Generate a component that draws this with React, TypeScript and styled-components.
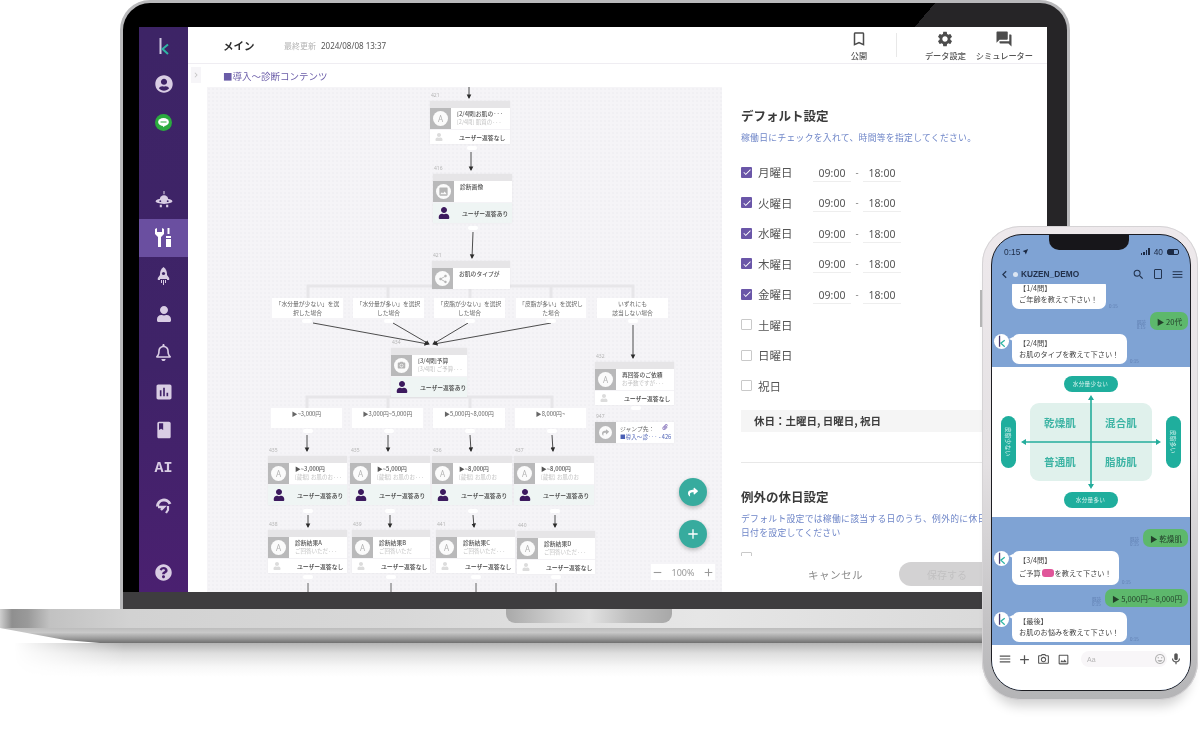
import type { ReactNode } from "react";
import styled, { createGlobalStyle } from "styled-components";
import {
  FaUserCircle,
  FaUser,
  FaRegBell,
  FaQuestionCircle,
  FaPaperclip,
  FaShare,
} from "react-icons/fa";
import {
  MdAssessment,
  MdClass,
  MdImage,
  MdShare,
  MdCameraAlt,
  MdSettings,
  MdForum,
  MdBookmarkBorder,
  MdChevronRight,
  MdChevronLeft,
  MdAdd,
  MdRemove,
  MdCheck,
  MdSearch,
  MdMenu,
  MdOutlineImage,
  MdOutlineCameraAlt,
  MdOutlineMic,
  MdOutlineEmojiEmotions,
  MdNearMe,
} from "react-icons/md";

const SANS = `"Noto Sans CJK JP", "Noto Sans", sans-serif`;
const ORIGIN_X = 207;
const ORIGIN_Y = 87;

const GlobalStyle = createGlobalStyle`
  html, body {
    margin: 0;
    background: #fff;
    font-family: ${SANS};
  }
  * { box-sizing: border-box; }
`;

const Stage = styled.div`
  position: relative;
  width: 1200px;
  height: 738px;
  overflow: hidden;
  background: #fff;
  filter: blur(0.4px);
`;

/* ---------- laptop ---------- */

const Lid = styled.div`
  position: relative;
  width: 950px;
  height: 609px;
  margin-left: 120px;
  border: solid #b9b9bb;
  border-width: 3px 3px 0;
  border-radius: 30px 30px 0 0;
  background: linear-gradient(130deg, #000 622px, #262527 622px);
  padding: 24px 20px 0 16px;
  display: flex;
  flex-direction: column;
`;

const Chin = styled.div`
  height: 17px;
  margin: 0 -20px 0 -16px;
  background: #3e3d3f;
`;

const Screen = styled.div`
  height: 565px;
  display: flex;
  background: #fff;
  overflow: hidden;
`;

const Sidebar = styled.nav`
  width: 49px;
  flex: none;
  background: linear-gradient(180deg, #3d2466 0%, #3f2368 60%, #4a2070 100%);
  display: flex;
  flex-direction: column;
  align-items: center;
  color: #d9cde4;
  padding-top: 9px;
`;

const Logo = styled.span`
  height: 20px;
`;

const LogoK = styled.span<{ $size: number }>`
  display: inline-flex;
  width: ${(p) => p.$size}px;
  height: ${(p) => p.$size}px;
`;

const NavItem = styled.div<{ $active?: boolean; $h?: number; $mt?: number }>`
  width: 49px;
  height: ${(p) => p.$h ?? 38}px;
  margin-top: ${(p) => p.$mt ?? 0}px;
  display: flex;
  align-items: center;
  justify-content: center;
  background: ${(p) => (p.$active ? "#6a4fa0" : "transparent")};
  color: ${(p) => (p.$active ? "#fff" : "#d9cde4")};
`;

const AiMark = styled.span`
  font: 700 15px/1 "Liberation Mono", monospace;
  letter-spacing: 0;
`;

const Main = styled.div`
  flex: 1;
  min-width: 0;
  display: flex;
  flex-direction: column;
`;

const TopBar = styled.header`
  height: 37px;
  flex: none;
  display: flex;
  align-items: center;
  padding: 0 14px 0 35px;
  border-bottom: 1px solid #efedf2;
`;

const PageTitle = styled.h1`
  margin: 0;
  font-size: 10.5px;
  font-weight: 700;
  color: #2d2d2d;
  width: 61px;
`;

const UpdatedLabel = styled.span`
  font-size: 8px;
  color: #b4b4b4;
  width: 37px;
`;

const UpdatedDate = styled.span`
  font: 400 8px "Noto Sans", sans-serif;
  color: #555;
`;

const TopActions = styled.div`
  margin-left: auto;
  display: flex;
  align-items: center;
  height: 100%;
`;

const TopAction = styled.div<{ $ml?: number }>`
  display: flex;
  flex-direction: column;
  align-items: center;
  gap: 2px;
  color: #4c4c4c;
  margin-left: ${(p) => p.$ml ?? 0}px;
`;

const TopActionLabel = styled.span`
  font-size: 8.2px;
  line-height: 10px;
  font-weight: 500;
  color: #555;
  white-space: nowrap;
`;

const TopDivider = styled.div`
  width: 1px;
  height: 24px;
  background: #e8e8e8;
  margin: 0 28px;
`;

const SubBar = styled.div`
  height: 23px;
  flex: none;
  display: flex;
  align-items: center;
  padding-left: 35px;
  position: relative;
  color: #6a5ca8;
  font-size: 9.5px;
`;

const Collapse = styled.span`
  position: absolute;
  left: 3px;
  top: 3px;
  width: 10px;
  height: 16px;
  display: flex;
  align-items: center;
  justify-content: center;
  background: #f6f5f8;
  color: #c4c4c4;
`;

const Workspace = styled.div`
  flex: 1;
  min-height: 0;
  display: flex;
`;

const Strip = styled.div`
  width: 19px;
  flex: none;
  background: #fff;
`;

const Canvas = styled.div`
  position: relative;
  width: 515px;
  flex: none;
  background-color: #f5f4f7;
  background-image: radial-gradient(#f1f0f4 0.7px, transparent 0.8px);
  background-size: 4px 4px;
  overflow: hidden;
`;

const EdgeLayer = styled.svg`
  position: absolute;
  inset: 0;
  width: 515px;
  height: 505px;
`;

const NodeBox = styled.div<{ $x: number; $y: number; $w: number }>`
  position: absolute;
  left: ${(p) => p.$x - ORIGIN_X}px;
  top: ${(p) => p.$y - ORIGIN_Y}px;
  width: ${(p) => p.$w}px;
  display: flex;
  flex-direction: column;
  background: #fff;
  box-shadow: 0 0 2px rgba(0, 0, 0, 0.06);
`;

const NodeId = styled.span`
  position: absolute;
  left: 1px;
  top: -9px;
  font: 400 5px "Noto Sans", sans-serif;
  color: #b5b5b5;
`;

const NodeHead = styled.div`
  height: 7px;
  background: #e6e5e7;
`;

const NodeBody = styled.div`
  height: 21px;
  display: flex;
`;

const IconBox = styled.div<{ $size?: number }>`
  width: ${(p) => p.$size ?? 21}px;
  height: ${(p) => p.$size ?? 21}px;
  flex: none;
  background: #b9b9ba;
  display: flex;
  align-items: center;
  justify-content: center;
`;

const IconDisc = styled.div<{ $size?: number }>`
  width: ${(p) => p.$size ?? 15}px;
  height: ${(p) => p.$size ?? 15}px;
  border-radius: 50%;
  background: #fbfbfb;
  color: #b5b5b5;
  display: flex;
  align-items: center;
  justify-content: center;
  font: 400 8px/1 "Noto Sans", sans-serif;
`;

const NodeText = styled.div`
  min-width: 0;
  flex: 1;
  padding: 2px 0 0 6px;
  overflow: hidden;
  white-space: nowrap;
`;

const NodeTitle = styled.div`
  font-size: 5.8px;
  line-height: 8px;
  font-weight: 500;
  color: #555;
`;

const NodeSub = styled.div`
  font-size: 5.5px;
  line-height: 9px;
  color: #c2c2c2;
`;

const NodeFoot = styled.div<{ $reply: boolean }>`
  height: ${(p) => (p.$reply ? 21 : 15)}px;
  display: flex;
  align-items: center;
  padding-left: 5px;
  background: ${(p) => (p.$reply ? "#eff5f4" : "#fff")};
  color: ${(p) => (p.$reply ? "#3c1a5e" : "#dcdcdc")};
  border-top: 1px solid #f4f3f6;
`;

const FootText = styled.span<{ $reply: boolean }>`
  font-size: 5.8px;
  font-weight: 500;
  color: #3d3d3d;
  margin-left: ${(p) => (p.$reply ? 12 : 16)}px;
  white-space: nowrap;
`;

const JumpText = styled.div`
  padding: 2px 0 0 4px;
  white-space: nowrap;
  flex: 1;
  position: relative;
`;

const JumpTitle = styled.div`
  font-size: 5.8px;
  line-height: 9px;
  color: #666;
`;

const JumpLink = styled.div`
  font-size: 5.6px;
  line-height: 9px;
  color: #4a5fb5;
`;

const JumpClip = styled.span`
  position: absolute;
  right: 6px;
  top: 2px;
  color: #8e7cc0;
  display: flex;
`;

const BranchBox = styled.div<{ $x: number; $y: number; $w: number; $h: number; $top?: boolean }>`
  position: absolute;
  left: ${(p) => p.$x - ORIGIN_X}px;
  top: ${(p) => p.$y - ORIGIN_Y}px;
  width: ${(p) => p.$w}px;
  height: ${(p) => p.$h}px;
  background: #fff;
  font-size: 5.8px;
  line-height: 9px;
  color: #666;
  display: flex;
  align-items: ${(p) => (p.$top ? "flex-start" : "center")};
  justify-content: center;
  text-align: center;
  padding-top: ${(p) => (p.$top ? "1px" : "0")};
  white-space: pre;
`;

const FloatControls = styled.div`
  position: absolute;
  right: 7px;
  bottom: 12px;
  display: flex;
  flex-direction: column;
  align-items: flex-end;
`;

const Fab = styled.div<{ $mb: number }>`
  width: 28px;
  height: 28px;
  margin: 0 8px ${(p) => p.$mb}px 0;
  border-radius: 50%;
  background: #37ab9e;
  color: #fff;
  display: flex;
  align-items: center;
  justify-content: center;
  box-shadow: 0 2px 4px rgba(0, 0, 0, 0.25);
`;

const ZoomBar = styled.div`
  width: 64px;
  height: 16px;
  background: #fff;
  display: flex;
  align-items: center;
  justify-content: space-between;
  color: #999;
  font: 400 9px "Noto Sans", sans-serif;
`;

/* ---------- settings panel ---------- */

const Panel = styled.aside`
  position: relative;
  flex: 1;
  min-width: 0;
  margin-left: 1px;
  padding: 20px 60px 0 18px;
  background: #fff;
  overflow: hidden;
  white-space: nowrap;
`;

const PanelTitle = styled.h2`
  margin: 0;
  font-size: 12.5px;
  line-height: 18px;
  font-weight: 700;
  color: #3b3b3b;
`;

const PanelNote = styled.p<{ $mb?: number }>`
  margin: 6px 0 ${(p) => p.$mb ?? 0}px;
  font-size: 8.8px;
  line-height: 14px;
  color: #6f86c8;
  letter-spacing: 0.3px;
`;

const DayRow = styled.div`
  height: 30.5px;
  display: flex;
  align-items: center;
`;

const Check = styled.span<{ $on: boolean }>`
  width: 11px;
  height: 11px;
  flex: none;
  border-radius: 1px;
  background: ${(p) => (p.$on ? "#6a56a8" : "#fff")};
  border: ${(p) => (p.$on ? "none" : "1px solid #c9c9c9")};
  color: #fff;
  display: flex;
  align-items: center;
  justify-content: center;
`;

const DayName = styled.span`
  width: 55px;
  margin-left: 6px;
  font-size: 11.5px;
  color: #555;
`;

const TimeField = styled.span`
  width: 38px;
  text-align: center;
  font: 400 10.5px "Noto Sans", sans-serif;
  color: #555;
  border-bottom: 1px solid #eeeeee;
  line-height: 16px;
  position: relative;
  top: 1px;
`;

const TimeDash = styled.span`
  width: 12px;
  text-align: center;
  font-size: 9px;
  color: #666;
`;

const HolidayBar = styled.div`
  margin-top: 9px;
  width: 244px;
  height: 22px;
  padding-left: 13px;
  background: #f5f5f5;
  display: flex;
  align-items: center;
  font-size: 10.5px;
  font-weight: 700;
  color: #3d3d3d;
`;

const PanelRule = styled.hr`
  margin: 30px 0 25px;
  width: 244px;
  border: 0;
  border-top: 1px solid #e8e8e8;
`;

const EmptyCheck = styled.span`
  display: block;
  width: 11px;
  height: 11px;
  margin-top: 12px;
  border: 1px solid #c9c9c9;
  border-radius: 1px;
`;

const PanelFooter = styled.div`
  position: absolute;
  left: 0;
  right: 0;
  bottom: 0;
  height: 36px;
  background: #fff;
  display: flex;
  align-items: center;
  padding-left: 85px;
  gap: 36px;
`;

const CancelText = styled.span`
  font-size: 10.6px;
  color: #8a8a8a;
  letter-spacing: 0.4px;
`;

const SaveButton = styled.span`
  width: 100px;
  height: 24px;
  border-radius: 12px;
  background: #d3d2d3;
  color: #c2c1c2;
  font-size: 10px;
  display: flex;
  align-items: center;
  padding-left: 28px;
`;

/* ---------- laptop base ---------- */

const Base = styled.div`
  width: 1190px;
  height: 34px;
  display: flex;
  flex-direction: column;
  clip-path: polygon(0 0, 100% 0, 100% 100%, 100px 100%, 65px 31px, 0 19px);
`;

const BaseTop = styled.div`
  height: 19px;
  flex: none;
  background: linear-gradient(90deg, #cfcfcf 0, #8f8f8f 12px, #9a9a9a 28px, #c2c2c2 50px, #d2d2d2 130px, #d8d8d8 400px, #e6e6e6 700px, #d9d9d9 1000px);
  padding-left: 506px;
`;

const Notch = styled.div`
  width: 166px;
  height: 14px;
  border-radius: 0 0 9px 9px;
  background: linear-gradient(90deg, #a9a9a9, #cfcfcf 30%, #e2e2e2 50%, #bdbdbd 75%, #a8a8a8);
`;

const BaseBottom = styled.div`
  flex: 1;
  background: linear-gradient(180deg, #bdbdbd 0, #c8c8c8 30%, #999 70%, #6f6f6f 100%);
`;

const Reflection = styled.div`
  width: 1000px;
  height: 34px;
  margin-left: 14px;
  background: linear-gradient(180deg, #b3b3b3 0, #dedede 30%, #f7f7f7 70%, #fff 100%);
  -webkit-mask-image: linear-gradient(90deg, transparent 0, #000 110px);
  mask-image: linear-gradient(90deg, transparent 0, #000 110px);
`;

/* ---------- phone ---------- */

const Phone = styled.div`
  position: absolute;
  left: 982px;
  top: 226px;
  width: 216px;
  height: 474px;
  border-radius: 38px;
  padding: 8px 7px 9px 9px;
  background: linear-gradient(180deg, #eee9ec 0, #e4e1e3 50%, #b4b4b6 100%);
  box-shadow: inset 0 0 0 1px #d5d3d5, 0 14px 12px -8px rgba(0, 0, 0, 0.18);
`;

const PhoneButton = styled.span`
  position: absolute;
  left: -2px;
  top: 64px;
  width: 2px;
  height: 37px;
  background: #b5b5b5;
`;

const PhoneScreen = styled.div`
  position: relative;
  height: 100%;
  border-radius: 31px;
  border: 1.5px solid #1d1d22;
  background: #7fa3d4;
  overflow: hidden;
  display: flex;
  flex-direction: column;
`;

const PhoneNotch = styled.div`
  position: absolute;
  left: 57px;
  top: 0;
  width: 80px;
  height: 15px;
  background: #17161a;
  border-radius: 0 0 10px 10px;
`;

const StatusBar = styled.div`
  height: 29px;
  flex: none;
  display: flex;
  align-items: center;
  justify-content: space-between;
  padding: 4px 11px 0 12px;
  color: #1c2a44;
  font: 500 8.4px "Liberation Sans", sans-serif;
`;

const StatusGroup = styled.span`
  display: flex;
  align-items: center;
  gap: 2px;
`;

const SignalBar = styled.span<{ $h: number }>`
  width: 1.5px;
  height: ${(p) => p.$h}px;
  background: #1c2a44;
`;

const Signal = styled.span`
  display: flex;
  align-items: flex-end;
  gap: 1px;
  margin-right: 2px;
`;

const Battery = styled.span`
  width: 12px;
  height: 6px;
  border: 0.8px solid #1c2a44;
  border-radius: 2px;
  background: linear-gradient(90deg, #1c2a44 60%, transparent 60%);
  margin-left: 2px;
`;

const ChatHeader = styled.div`
  height: 20px;
  flex: none;
  display: flex;
  align-items: center;
  padding: 0 6px 0 5px;
  color: #23344f;
`;

const ChatTitle = styled.span`
  margin-left: 1px;
  font: 700 8.3px "Liberation Sans", sans-serif;
  color: #22304a;
  display: flex;
  align-items: center;
  gap: 3px;
`;

const TitleDot = styled.span`
  width: 5px;
  height: 5px;
  border-radius: 50%;
  background: #dbe5f2;
`;

const HeaderIcons = styled.span`
  margin-left: auto;
  display: flex;
  align-items: center;
  gap: 8px;
`;

const MemoIcon = styled.span`
  width: 8px;
  height: 10px;
  border: 1px solid #23344f;
  border-radius: 1px;
  margin: 0 1px;
`;

const ChatArea = styled.div<{ $h: number; $pt?: number }>`
  height: ${(p) => p.$h}px;
  flex: none;
  overflow: hidden;
  padding-top: ${(p) => p.$pt ?? 0}px;
  display: flex;
  flex-direction: column;
`;

const Incoming = styled.div<{ $mt: number }>`
  display: flex;
  align-items: flex-start;
  margin: ${(p) => p.$mt}px 0 0 2px;
`;

const Avatar = styled.span<{ $hidden?: boolean }>`
  width: 15px;
  height: 15px;
  flex: none;
  border-radius: 50%;
  background: ${(p) => (p.$hidden ? "transparent" : "#fff")};
  display: flex;
  align-items: center;
  justify-content: center;
`;

const Bubble = styled.div<{ $w: number; $tall?: boolean; $tail?: boolean }>`
  position: relative;
  margin-left: 3px;
  width: ${(p) => p.$w}px;
  padding: ${(p) => (p.$tall ? "3px 0 5px 7px" : "4px 0 4px 7px")};
  background: #fff;
  border-radius: 7px;
  font-size: 7.2px;
  line-height: ${(p) => (p.$tall ? 13 : 11)}px;
  color: #444;
  white-space: nowrap;
  &::before {
    content: "";
    display: ${(p) => (p.$tail ? "block" : "none")};
    position: absolute;
    left: -3px;
    top: 3px;
    border: solid transparent;
    border-width: 2px 4px 2px 0;
    border-right-color: #fff;
  }
`;

const Stamp = styled.span`
  align-self: flex-end;
  margin-left: 3px;
  font-size: 4.5px;
  line-height: 5px;
  color: #5f7eb0;
  white-space: pre;
`;

const Redacted = styled.span`
  display: inline-block;
  width: 12px;
  height: 8px;
  margin: 0 1px;
  vertical-align: -1px;
  border-radius: 3px;
  background: #e0569a;
`;

const Outgoing = styled.div<{ $mt: number }>`
  display: flex;
  justify-content: flex-end;
  align-items: flex-end;
  gap: 4px;
  margin: ${(p) => p.$mt}px 2px 0 0;
`;

const GreenBubble = styled.div`
  height: 18px;
  padding: 0 6px 0 7px;
  border-radius: 7px;
  background: #5db86c;
  color: #23402a;
  font-size: 7.6px;
  display: flex;
  align-items: center;
  white-space: nowrap;
`;

const RichMenu = styled.section`
  height: 150px;
  flex: none;
  background: #fff;
  display: grid;
  grid-template-columns: 15px 122px 15px;
  grid-template-rows: 16px 78px 16px;
  column-gap: 14px;
  row-gap: 11px;
  justify-content: center;
  align-content: center;
  justify-items: center;
  align-items: center;
  margin-left: -1px;
`;

const Pill = styled.span<{ $col: number; $row: number; $vertical?: boolean }>`
  grid-column: ${(p) => p.$col};
  grid-row: ${(p) => p.$row};
  width: ${(p) => (p.$vertical ? "15px" : "54px")};
  height: ${(p) => (p.$vertical ? "52px" : "16px")};
  border-radius: 8px;
  background: #1fae9d;
  color: #d7f2ee;
  font-size: 5.6px;
  display: flex;
  align-items: center;
  justify-content: center;
  white-space: nowrap;
  writing-mode: ${(p) => (p.$vertical ? "vertical-rl" : "horizontal-tb")};
  text-orientation: sideways;
  letter-spacing: 0.3px;
`;

const Matrix = styled.div`
  position: relative;
  grid-column: 2;
  grid-row: 2;
  width: 122px;
  height: 78px;
  background: #e0f1ec;
  border-radius: 9px;
  display: grid;
  grid-template: 1fr 1fr / 1fr 1fr;
`;

const MatrixCell = styled.span`
  display: flex;
  align-items: center;
  justify-content: center;
  font-size: 10.5px;
  font-weight: 700;
  color: #3db4a4;
  letter-spacing: 0.2px;
`;

const MatrixAxes = styled.svg`
  position: absolute;
  left: -9px;
  top: -8px;
  width: 140px;
  height: 94px;
`;

const InputBar = styled.div`
  flex: 1;
  background: #fff;
  display: flex;
  align-items: flex-start;
  padding: 6px 4px 0 3px;
  color: #555;
`;

const InputIcon = styled.span`
  width: 19.5px;
  height: 16px;
  display: flex;
  align-items: center;
  justify-content: center;
`;

const InputField = styled.div`
  margin: 0 0 0 8px;
  flex: 1;
  height: 16px;
  border-radius: 8px;
  background: #f8f6f8;
  display: flex;
  align-items: center;
  justify-content: space-between;
  padding: 0 1px 0 6px;
  color: #b5b5b5;
  font: 400 7px "Liberation Sans", sans-serif;
`;

/* ---------- data ---------- */

type IconKind = "a" | "image" | "share" | "camera";

type DiagramNode = {
  id: string;
  x: number;
  y: number;
  w: number;
  title: string;
  sub?: string;
  icon: IconKind;
  reply?: boolean;
  noFoot?: boolean;
};

const nodes: DiagramNode[] = [
  { id: "421", x: 430, y: 101, w: 80, title: "[2/4問]お肌の···", sub: "[2/4問] 肌質の···", icon: "a" },
  { id: "416", x: 433, y: 174, w: 79, title: "診断画像", icon: "image", reply: true },
  { id: "421", x: 432, y: 261, w: 78, title: "お肌のタイプが", icon: "share", noFoot: true },
  { id: "434", x: 391, y: 348, w: 76, title: "[3/4問]予算", sub: "[3/4問] ご予算···", icon: "camera", reply: true },
  { id: "432", x: 595, y: 362, w: 79, title: "再回答のご依頼", sub: "お手数ですが···", icon: "a" },
  { id: "435", x: 268, y: 456, w: 79, title: "▶~3,000円", sub: "[蔵据] お肌のお···", icon: "a", reply: true },
  { id: "435", x: 350, y: 456, w: 80, title: "▶~5,000円", sub: "[蔵据] お肌のお···", icon: "a", reply: true },
  { id: "436", x: 432, y: 456, w: 80, title: "▶~8,000円", sub: "[蔵据] お肌のお", icon: "a", reply: true },
  { id: "437", x: 514, y: 456, w: 80, title: "▶~8,000円", sub: "[蔵据] お肌のお", icon: "a", reply: true },
  { id: "438", x: 268, y: 530, w: 79, title: "診断結果A", sub: "ご回答いただ···", icon: "a" },
  { id: "439", x: 352, y: 530, w: 78, title: "診断結果B", sub: "ご回答いただ", icon: "a" },
  { id: "441", x: 436, y: 530, w: 79, title: "診断結果C", sub: "ご回答いただ···", icon: "a" },
  { id: "440", x: 517, y: 531, w: 78, title: "診断結果D", sub: "ご回答いただ···", icon: "a" },
];

const branches = [
  { x: 272, y: 298, w: 71, h: 20, text: "「水分量が少ない」を選\n択した場合" },
  { x: 353, y: 298, w: 71, h: 20, text: "「水分量が多い」を選択\nした場合" },
  { x: 434, y: 298, w: 71, h: 20, text: "「皮脂が少ない」を選択\nした場合" },
  { x: 516, y: 298, w: 70, h: 20, text: "「皮脂が多い」を選択し\nた場合" },
  { x: 597, y: 298, w: 71, h: 20, text: "いずれにも\n該当しない場合" },
  { x: 271, y: 408, w: 71, h: 20, text: "▶~3,000円", top: true },
  { x: 352, y: 408, w: 71, h: 20, text: "▶3,000円~5,000円", top: true },
  { x: 433, y: 408, w: 72, h: 20, text: "▶5,000円~8,000円", top: true },
  { x: 515, y: 408, w: 71, h: 20, text: "▶8,000円~", top: true },
];

const arrows: [number, number, number, number][] = [
  [469, 87, 469, 98],
  [471, 152, 471, 170],
  [473, 232, 472, 258],
  [313, 323, 428, 344],
  [393, 323, 429, 344],
  [468, 323, 433, 344],
  [551, 323, 434, 344],
  [633, 325, 633, 358],
  [307, 435, 307, 451],
  [388, 435, 388, 451],
  [470, 435, 471, 451],
  [552, 435, 553, 451],
  [308, 515, 308, 527],
  [390, 515, 390, 527],
  [473, 515, 474, 527],
  [555, 515, 555, 527],
];

const stubs = [
  [308, 583],
  [391, 583],
  [476, 583],
  [556, 583],
];

const connectors = [
  "M308 298V286H633V298M388 286V298M470 286V298M551 286V298",
  "M307 408V397H552V408M388 397V408M470 397V408",
];

const dots = [
  [472, 148], [473, 228], [307, 321], [389, 321], [470, 321], [551, 321], [633, 321],
  [308, 431], [389, 431], [470, 431], [552, 431], [308, 511], [390, 511], [473, 511],
  [555, 511], [308, 577], [391, 577], [476, 577], [556, 577], [636, 408],
];

const days = [
  { name: "月曜日", on: true },
  { name: "火曜日", on: true },
  { name: "水曜日", on: true },
  { name: "木曜日", on: true },
  { name: "金曜日", on: true },
  { name: "土曜日", on: false },
  { name: "日曜日", on: false },
  { name: "祝日", on: false },
];

/* ---------- small drawings ---------- */

function KMark({ size }: { size: number }) {
  return (
    <LogoK $size={size}>
      <svg viewBox="0 0 16 20" width={size} height={size}>
        <path d="M4.500 2v16" stroke="#cfc6e0" strokeWidth="2" fill="none" />
        <path d="M12 8.500 6.500 13l5.500 5" stroke="#2fb5a4" strokeWidth="2" fill="none" />
      </svg>
    </LogoK>
  );
}

function PhoneK() {
  return (
    <LogoK $size={13}>
      <svg viewBox="0 0 16 20" width={13} height={13}>
        <path d="M5 1v17" stroke="#4b3a70" strokeWidth="2" fill="none" />
        <path d="M13 8 7 12.500l6 5.500" stroke="#2fb5a4" strokeWidth="2" fill="none" />
      </svg>
    </LogoK>
  );
}

function LineIcon() {
  return (
    <svg width="17" height="17" viewBox="0 0 17 17">
      <circle cx="8.500" cy="8.500" r="8.500" fill="#2bab3f" />
      <ellipse cx="8.500" cy="8" rx="5.400" ry="4" fill="#fff" />
      <path d="M7.500 11.500l1.200 1.800 1.300-1.800z" fill="#fff" />
      <path d="M5.500 8h6" stroke="#2bab3f" strokeWidth="1" />
    </svg>
  );
}

function RobotIcon() {
  return (
    <svg width="18" height="18" viewBox="0 0 17 17" fill="#d9cde4">
      <path d="M8 0h1v3H8z" />
      <path d="M4.500 8a4 4 0 0 1 8 0z" />
      <ellipse cx="8.500" cy="9.600" rx="8" ry="2.600" />
      <circle cx="5" cy="9.600" r=".9" fill="#3d2466" />
      <circle cx="12" cy="9.600" r=".9" fill="#3d2466" />
      <path d="M4.500 13h2v2.400h-2zM10.500 13h2v2.400h-2z" />
    </svg>
  );
}

function ToolsIcon() {
  return (
    <svg width="18" height="20" viewBox="0 0 18 20" fill="#fff">
      <path d="M0 1v5l3 3v10h3V9l3-3V1L7 0v4H2V0z" />
      <path d="M12.500 0h2v6h-2z" />
      <path d="M11 8h5v2h-5z" />
      <path d="M11 11h5v8h-5z" />
    </svg>
  );
}

function RocketIcon() {
  return (
    <svg width="13" height="18" viewBox="0 0 13 18" fill="#d9cde4">
      <path d="M6.500 0C9 2 10 4.500 10 7v5H3V7c0-2.500 1-5 3.500-7z" />
      <circle cx="6.500" cy="6.500" r="1.600" fill="#3d2466" />
      <path d="M3 8 .8 11v2H3zM10 8l2.200 3v2H10zM6 13h1v5H6zM4 13h1v3H4zM8 13h1v3H8z" />
    </svg>
  );
}

function HeadsetIcon() {
  return (
    <svg width="18" height="18" viewBox="0 0 18 18" fill="none" stroke="#d9cde4">
      <path d="M2.500 9.500A6.500 6.500 0 0 1 15 7" strokeWidth="3" />
      <path d="M3 10h6l-3 3" strokeWidth="2.400" />
      <path d="M13 9v4l-2 3" strokeWidth="2.200" />
    </svg>
  );
}

function NodeIcon({ kind }: { kind: IconKind }) {
  switch (kind) {
    case "image":
      return <IconDisc><MdImage size={11} /></IconDisc>;
    case "share":
      return <IconDisc><MdShare size={10} /></IconDisc>;
    case "camera":
      return <IconDisc><MdCameraAlt size={9} /></IconDisc>;
    default:
      return <IconDisc>A</IconDisc>;
  }
}

function Node({ n }: { n: DiagramNode }) {
  return (
    <NodeBox $x={n.x} $y={n.y} $w={n.w}>
      <NodeId>{n.id}</NodeId>
      <NodeHead />
      <NodeBody>
        <IconBox><NodeIcon kind={n.icon} /></IconBox>
        <NodeText>
          <NodeTitle>{n.title}</NodeTitle>
          {n.sub && <NodeSub>{n.sub}</NodeSub>}
        </NodeText>
      </NodeBody>
      {!n.noFoot && (
        <NodeFoot $reply={!!n.reply}>
          <FaUser size={n.reply ? 12 : 8} />
          <FootText $reply={!!n.reply}>
            {n.reply ? "ユーザー返答あり" : "ユーザー返答なし"}
          </FootText>
        </NodeFoot>
      )}
    </NodeBox>
  );
}

function Diagram() {
  return (
    <>
      <EdgeLayer viewBox={`${ORIGIN_X} ${ORIGIN_Y} 515 505`}>
        <defs>
          <marker id="head" markerWidth="6" markerHeight="6" refX="4" refY="3" orient="auto">
            <path d="M0 .4 5 3 0 5.600z" fill="#2c2c2c" />
          </marker>
        </defs>
        {connectors.map((d) => (
          <path key={d} d={d} fill="none" stroke="#e7e6e9" strokeWidth="3" />
        ))}
        {arrows.map(([x1, y1, x2, y2]) => (
          <line
            key={`${x1}-${y1}-${x2}`}
            x1={x1} y1={y1} x2={x2} y2={y2}
            stroke="#3a3a3a" strokeWidth="0.9" markerEnd="url(#head)"
          />
        ))}
        {stubs.map(([x, y]) => (
          <line key={x} x1={x} y1={y} x2={x} y2={592} stroke="#555" strokeWidth="0.9" />
        ))}
        {dots.map(([x, y]) => (
          <rect key={`${x}-${y}`} x={x - 5} y={y - 2} width="10" height="4" rx="2" fill="#fff" />
        ))}
      </EdgeLayer>
      {branches.map((b) => (
        <BranchBox key={b.text} $x={b.x} $y={b.y} $w={b.w} $h={b.h} $top={b.top}>
          {b.text}
        </BranchBox>
      ))}
      {nodes.map((n) => (
        <Node key={`${n.x}-${n.y}`} n={n} />
      ))}
      <NodeBox $x={595} $y={422} $w={79}>
        <NodeId>947</NodeId>
        <NodeBody>
          <IconBox>
            <IconDisc $size={13}><FaShare size={7} /></IconDisc>
          </IconBox>
          <JumpText>
            <JumpTitle>ジャンプ先：</JumpTitle>
            <JumpLink>■導入～診··· - 426</JumpLink>
            <JumpClip><FaPaperclip size={6} /></JumpClip>
          </JumpText>
        </NodeBody>
      </NodeBox>
      <FloatControls>
        <Fab $mb={14}><FaShare size={10} /></Fab>
        <Fab $mb={16}><MdAdd size={16} /></Fab>
        <ZoomBar>
          <MdRemove size={13} />
          100%
          <MdAdd size={13} />
        </ZoomBar>
      </FloatControls>
    </>
  );
}

function Settings() {
  return (
    <Panel>
      <PanelTitle>デフォルト設定</PanelTitle>
      <PanelNote $mb={11.75}>稼働日にチェックを入れて、時間等を指定してください。</PanelNote>
      {days.map((d) => (
        <DayRow key={d.name}>
          <Check $on={d.on}>{d.on && <MdCheck size={10} />}</Check>
          <DayName>{d.name}</DayName>
          {d.on && (
            <>
              <TimeField>09:00</TimeField>
              <TimeDash>-</TimeDash>
              <TimeField>18:00</TimeField>
            </>
          )}
        </DayRow>
      ))}
      <HolidayBar>休日：土曜日, 日曜日, 祝日</HolidayBar>
      <PanelRule />
      <PanelTitle>例外の休日設定</PanelTitle>
      <PanelNote>
        デフォルト設定では稼働に該当する日のうち、例外的に休日にしたい
        <br />
        日付を設定してください
      </PanelNote>
      <EmptyCheck />
      <PanelFooter>
        <CancelText>キャンセル</CancelText>
        <SaveButton>保存する</SaveButton>
      </PanelFooter>
    </Panel>
  );
}

function Chat({ mt, w, avatar = true, tall, children }: { mt: number; w: number; avatar?: boolean; tall?: boolean; children: ReactNode }) {
  return (
    <Incoming $mt={mt}>
      <Avatar $hidden={!avatar}>{avatar && <PhoneK />}</Avatar>
      <Bubble $w={w} $tall={tall} $tail={avatar}>{children}</Bubble>
      <Stamp>0:15</Stamp>
    </Incoming>
  );
}

function Reply({ mt, children }: { mt: number; children: ReactNode }) {
  return (
    <Outgoing $mt={mt}>
      <Stamp>{"既読\n0:15"}</Stamp>
      <GreenBubble>{children}</GreenBubble>
    </Outgoing>
  );
}

function PhoneMock() {
  return (
    <Phone>
      <PhoneButton />
      <PhoneScreen>
        <PhoneNotch />
        <StatusBar>
          <StatusGroup>0:15 <MdNearMe size={7} /></StatusGroup>
          <StatusGroup>
            <Signal>
              <SignalBar $h={2} /><SignalBar $h={3} /><SignalBar $h={5} /><SignalBar $h={7} />
            </Signal>
            40
            <Battery />
          </StatusGroup>
        </StatusBar>
        <ChatHeader>
          <MdChevronLeft size={15} />
          <ChatTitle><TitleDot />KUZEN_DEMO</ChatTitle>
          <HeaderIcons>
            <MdSearch size={13} />
            <MemoIcon />
            <MdMenu size={13} />
          </HeaderIcons>
        </ChatHeader>
        <ChatArea $h={83}>
          <Chat mt={-5} w={94} avatar={false}>
            　【1/4問】
            <br />
            ご年齢を教えて下さい！
          </Chat>
          <Reply mt={3}>▶ 20代</Reply>
          <Chat mt={4} w={115}>
            　【2/4問】
            <br />
            お肌のタイプを教えて下さい！
          </Chat>
        </ChatArea>
        <RichMenu>
          <Pill $col={2} $row={1}>水分量少ない</Pill>
          <Pill $col={1} $row={2} $vertical>皮脂少ない</Pill>
          <Matrix>
            <MatrixCell>乾燥肌</MatrixCell>
            <MatrixCell>混合肌</MatrixCell>
            <MatrixCell>普通肌</MatrixCell>
            <MatrixCell>脂肪肌</MatrixCell>
            <MatrixAxes viewBox="0 0 140 94">
              <path d="M70 3V91M2 47H138" stroke="#25ad9c" strokeWidth="1.6" />
              <path d="M70 0l-3 5h6zM70 94l-3-5h6zM0 47l5-3v6zM140 47l-5-3v6z" fill="#25ad9c" />
            </MatrixAxes>
          </Matrix>
          <Pill $col={3} $row={2} $vertical>皮脂多い</Pill>
          <Pill $col={2} $row={3}>水分量多い</Pill>
        </RichMenu>
        <ChatArea $h={128} $pt={12}>
          <Reply mt={0}>▶ 乾燥肌</Reply>
          <Chat mt={4} w={107} tall>
            　【3/4問】
            <br />
            ご予算<Redacted />を教えて下さい！
          </Chat>
          <Reply mt={4}>▶ 5,000円～8,000円</Reply>
          <Chat mt={5} w={115}>
            　【最後】
            <br />
            お肌のお悩みを教えて下さい！
          </Chat>
        </ChatArea>
        <InputBar>
          <InputIcon><MdMenu size={14} /></InputIcon>
          <InputIcon><MdAdd size={15} /></InputIcon>
          <InputIcon><MdOutlineCameraAlt size={13} /></InputIcon>
          <InputIcon><MdOutlineImage size={13} /></InputIcon>
          <InputField>
            Aa
            <MdOutlineEmojiEmotions size={12} />
          </InputField>
          <InputIcon><MdOutlineMic size={14} /></InputIcon>
        </InputBar>
      </PhoneScreen>
    </Phone>
  );
}

export default function App() {
  return (
    <>
      <GlobalStyle />
      <Stage>
        <Lid>
          <Screen>
            <Sidebar>
              <Logo><KMark size={20} /></Logo>
              <NavItem $mt={9}><FaUserCircle size={18} /></NavItem>
              <NavItem><LineIcon /></NavItem>
              <NavItem $mt={40}><RobotIcon /></NavItem>
              <NavItem $active><ToolsIcon /></NavItem>
              <NavItem><RocketIcon /></NavItem>
              <NavItem><FaUser size={16} /></NavItem>
              <NavItem><FaRegBell size={17} /></NavItem>
              <NavItem $mt={2}><MdAssessment size={20} /></NavItem>
              <NavItem><MdClass size={20} /></NavItem>
              <NavItem><AiMark>AI</AiMark></NavItem>
              <NavItem><HeadsetIcon /></NavItem>
              <NavItem $mt={28}><FaQuestionCircle size={17} /></NavItem>
            </Sidebar>
            <Main>
              <TopBar>
                <PageTitle>メイン</PageTitle>
                <UpdatedLabel>最終更新</UpdatedLabel>
                <UpdatedDate>2024/08/08 13:37</UpdatedDate>
                <TopActions>
                  <TopAction>
                    <MdBookmarkBorder size={18} />
                    <TopActionLabel>公開</TopActionLabel>
                  </TopAction>
                  <TopDivider />
                  <TopAction>
                    <MdSettings size={18} />
                    <TopActionLabel>データ設定</TopActionLabel>
                  </TopAction>
                  <TopAction $ml={10}>
                    <MdForum size={18} />
                    <TopActionLabel>シミュレーター</TopActionLabel>
                  </TopAction>
                </TopActions>
              </TopBar>
              <SubBar>
                <Collapse><MdChevronRight size={12} /></Collapse>
                ■導入～診断コンテンツ
              </SubBar>
              <Workspace>
                <Strip />
                <Canvas><Diagram /></Canvas>
                <Settings />
              </Workspace>
            </Main>
          </Screen>
          <Chin />
        </Lid>
        <Base>
          <BaseTop><Notch /></BaseTop>
          <BaseBottom />
        </Base>
        <Reflection />
        <PhoneMock />
      </Stage>
    </>
  );
}
